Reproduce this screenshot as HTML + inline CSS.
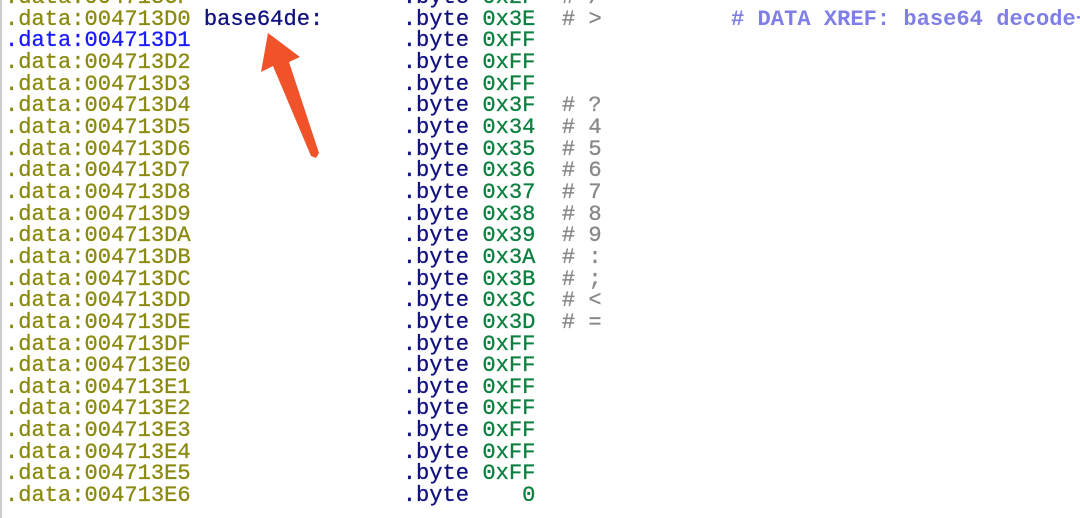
<!DOCTYPE html>
<html><head><meta charset="utf-8"><style>
html,body{margin:0;padding:0;background:#fff;width:1080px;height:518px;overflow:hidden;position:relative}
.l{position:absolute;left:0;top:0;border-left:2px solid #ccc;height:518px}
pre{position:absolute;left:5px;top:-13px;margin:0;font-family:"Liberation Mono",monospace;font-size:22.1px;line-height:21.65px;color:#000;-webkit-text-stroke:0.3px}
.a{color:#8b8a10}.b{color:#1a1aff}.n{color:#101080}.g{color:#0c8040}.c{color:#888}.x{color:#7f7fe6;font-weight:bold;margin-left:10px;-webkit-text-stroke:0}.k{color:#101080}
</style></head><body>
<div class="l"></div>
<pre><span class="a">.data:004713CF</span>                <span class="n">.byte</span> <span class="g">0x2F</span>  <span class="c"># /</span>
<span class="a">.data:004713D0</span> <span class="k">base64de:</span>      <span class="n">.byte</span> <span class="g">0x3E</span>  <span class="c"># &gt;</span>         <span class="x"># DATA XREF: base64 decode+</span>
<span class="b">.data:004713D1</span>                <span class="n">.byte</span> <span class="g">0xFF</span>
<span class="a">.data:004713D2</span>                <span class="n">.byte</span> <span class="g">0xFF</span>
<span class="a">.data:004713D3</span>                <span class="n">.byte</span> <span class="g">0xFF</span>
<span class="a">.data:004713D4</span>                <span class="n">.byte</span> <span class="g">0x3F</span>  <span class="c"># ?</span>
<span class="a">.data:004713D5</span>                <span class="n">.byte</span> <span class="g">0x34</span>  <span class="c"># 4</span>
<span class="a">.data:004713D6</span>                <span class="n">.byte</span> <span class="g">0x35</span>  <span class="c"># 5</span>
<span class="a">.data:004713D7</span>                <span class="n">.byte</span> <span class="g">0x36</span>  <span class="c"># 6</span>
<span class="a">.data:004713D8</span>                <span class="n">.byte</span> <span class="g">0x37</span>  <span class="c"># 7</span>
<span class="a">.data:004713D9</span>                <span class="n">.byte</span> <span class="g">0x38</span>  <span class="c"># 8</span>
<span class="a">.data:004713DA</span>                <span class="n">.byte</span> <span class="g">0x39</span>  <span class="c"># 9</span>
<span class="a">.data:004713DB</span>                <span class="n">.byte</span> <span class="g">0x3A</span>  <span class="c"># :</span>
<span class="a">.data:004713DC</span>                <span class="n">.byte</span> <span class="g">0x3B</span>  <span class="c"># ;</span>
<span class="a">.data:004713DD</span>                <span class="n">.byte</span> <span class="g">0x3C</span>  <span class="c"># &lt;</span>
<span class="a">.data:004713DE</span>                <span class="n">.byte</span> <span class="g">0x3D</span>  <span class="c"># =</span>
<span class="a">.data:004713DF</span>                <span class="n">.byte</span> <span class="g">0xFF</span>
<span class="a">.data:004713E0</span>                <span class="n">.byte</span> <span class="g">0xFF</span>
<span class="a">.data:004713E1</span>                <span class="n">.byte</span> <span class="g">0xFF</span>
<span class="a">.data:004713E2</span>                <span class="n">.byte</span> <span class="g">0xFF</span>
<span class="a">.data:004713E3</span>                <span class="n">.byte</span> <span class="g">0xFF</span>
<span class="a">.data:004713E4</span>                <span class="n">.byte</span> <span class="g">0xFF</span>
<span class="a">.data:004713E5</span>                <span class="n">.byte</span> <span class="g">0xFF</span>
<span class="a">.data:004713E6</span>                <span class="n">.byte</span>    <span class="g">0</span></pre>
<svg style="position:absolute;left:0;top:0" width="1080" height="518"><polygon points="268,33 300,57 289,62 319,153 316,158 311,156 273,66 261,72" fill="#f0522a"/></svg>
</body></html>
